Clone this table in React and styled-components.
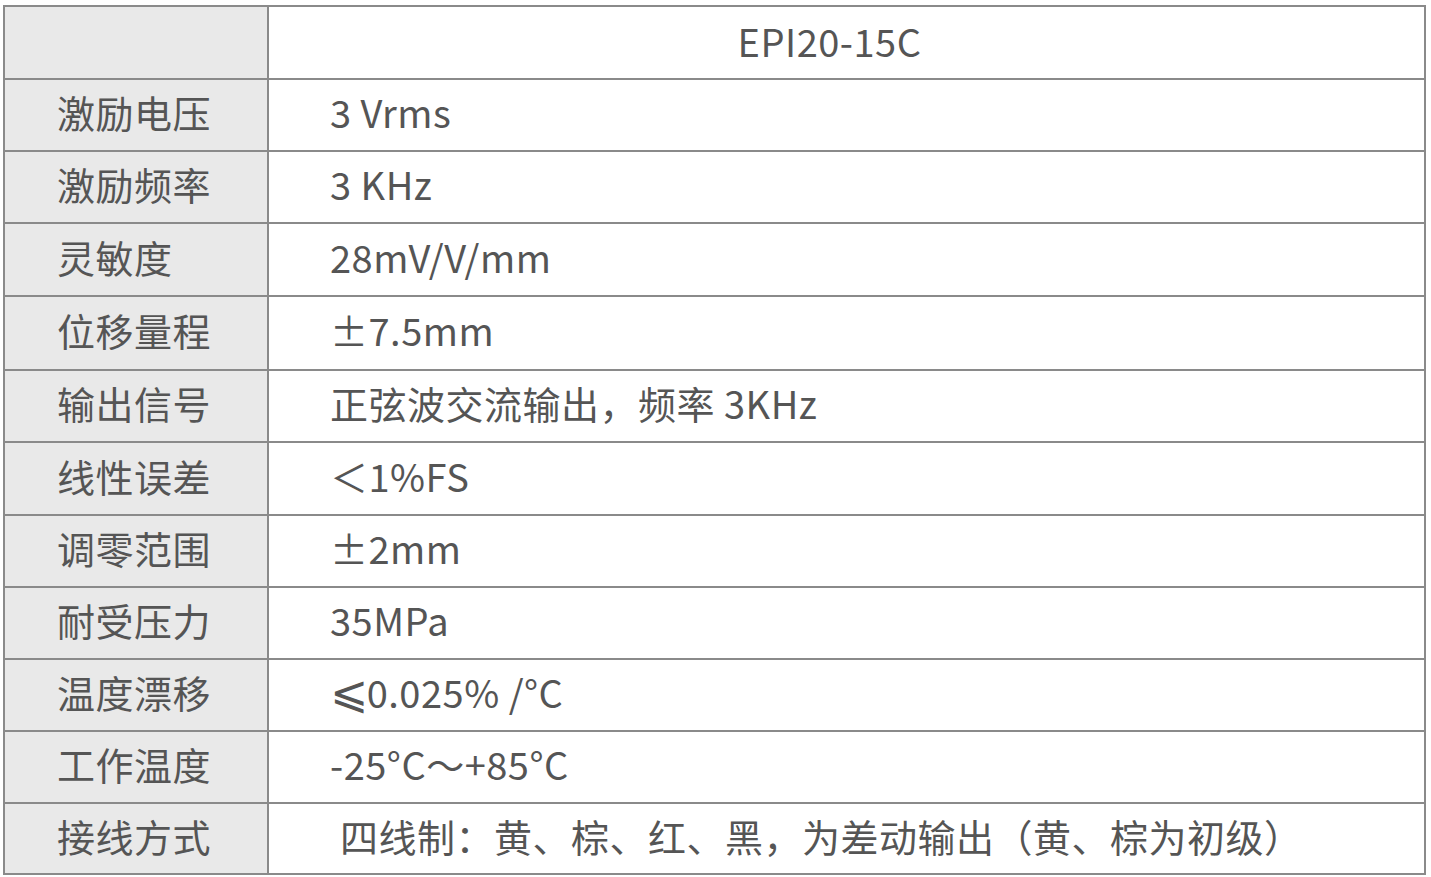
import React from 'react'
import styled, { createGlobalStyle } from 'styled-components'

const GlobalStyle = createGlobalStyle`
  html, body {
    margin: 0;
    padding: 0;
    background: #fff;
  }
  body {
    font-family: "Noto Sans CJK SC", "Noto Sans", sans-serif;
  }
`

const Page = styled.div`
  padding: 5px 0 0 3px;
`

const Table = styled.table`
  width: 1423px;
  border-collapse: collapse;
  table-layout: fixed;
  border: 2px solid #8a8a8a;
  color: #555;
  font-size: 38px;
  line-height: 1;
  letter-spacing: 0.5px;
`

const Row = styled.tr`
  height: ${(p) => p.h}px;
`

const Label = styled.td`
  width: 210px;
  background: #e9e9e9;
  border: 2px solid #8a8a8a;
  text-align: left;
  vertical-align: middle;
  padding: 0 0 6px 52px;
  white-space: nowrap;
`

const Value = styled.td`
  border: 2px solid #8a8a8a;
  vertical-align: middle;
  padding: 0 0 6px ${(p) => p.indent || 61}px;
  white-space: nowrap;
  text-align: ${(p) => (p.center ? 'center' : 'left')};
  ${(p) => p.center && 'padding: 0 34px 4px 0;'}
`

const Sym = styled.span`
  font-family: "DejaVu Sans", sans-serif;
  font-size: 1.2em;
  line-height: 0;
  margin-right: -2px;
`

const rows = [
  ['激励电压', '3 Vrms', 72],
  ['激励频率', '3 KHz', 72],
  ['灵敏度', '28mV/V/mm', 73],
  ['位移量程', '±7.5mm', 74],
  ['输出信号', '正弦波交流输出，频率 3KHz', 72],
  ['线性误差', '＜1%FS', 73],
  ['调零范围', '±2mm', 72],
  ['耐受压力', '35MPa', 72],
  ['温度漂移', <><Sym>⩽</Sym>0.025% /°C</>, 72],
  ['工作温度', '-25°C～+85°C', 72],
  ['接线方式', '四线制：黄、棕、红、黑，为差动输出（黄、棕为初级）', 71, 71],
]

export default function App() {
  return (
    <>
      <GlobalStyle />
      <Page>
        <Table>
          <tbody>
            <Row h={73}>
              <Label />
              <Value center>EPI20-15C</Value>
            </Row>
            {rows.map(([label, value, h, indent]) => (
              <Row key={label} h={h}>
                <Label>{label}</Label>
                <Value indent={indent}>{value}</Value>
              </Row>
            ))}
          </tbody>
        </Table>
      </Page>
    </>
  )
}
